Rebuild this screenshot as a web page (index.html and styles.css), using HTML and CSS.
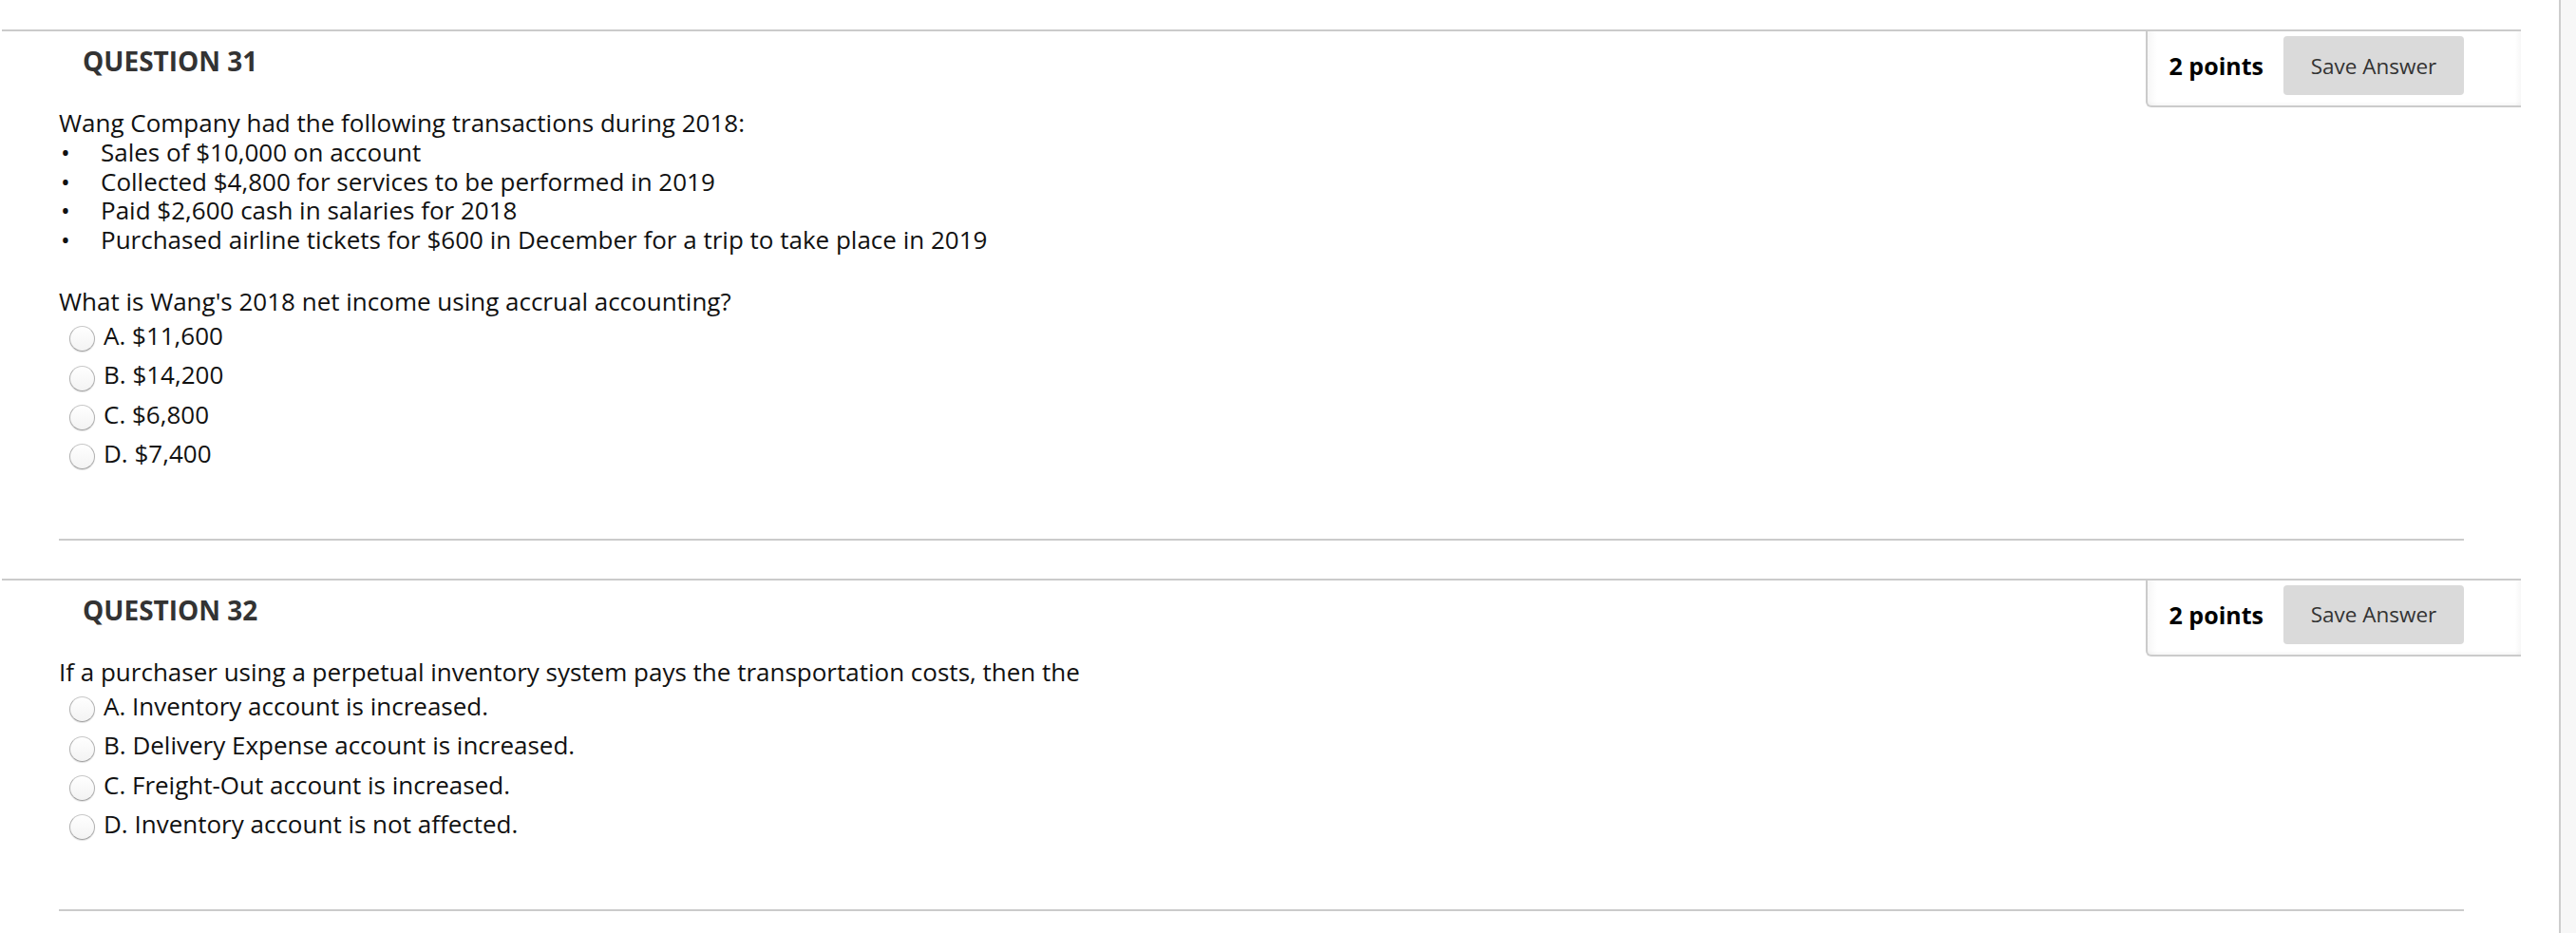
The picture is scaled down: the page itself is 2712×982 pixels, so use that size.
FILE: index.html
```html
<!DOCTYPE html>
<html lang="en">
<head>
<meta charset="utf-8">
<title>Questions</title>
<link rel="stylesheet" href="styles.css">
</head>
<body>
<div class="window">
  <main class="page">
    <section class="question">
      <div class="q-head">
        <h2 class="q-title">QUESTION 31</h2>
        <div class="points-box">
          <span class="points">2 points</span>
          <button class="save-btn" type="button">Save Answer</button>
        </div>
      </div>
      <div class="q-body">
        <p class="line">Wang Company had the following transactions during 2018:</p>
        <ul class="bullets">
          <li><span class="dot">•</span><span>Sales of $10,000 on account</span></li>
          <li><span class="dot">•</span><span>Collected $4,800 for services to be performed in 2019</span></li>
          <li><span class="dot">•</span><span>Paid $2,600 cash in salaries for 2018</span></li>
          <li><span class="dot">•</span><span>Purchased airline tickets for $600 in December for a trip to take place in 2019</span></li>
        </ul>
        <p class="line prompt">What is Wang's 2018 net income using accrual accounting?</p>
        <div class="options">
          <label class="opt"><input class="radio" type="radio" name="q31"><span>A. $11,600</span></label>
          <label class="opt"><input class="radio" type="radio" name="q31"><span>B. $14,200</span></label>
          <label class="opt"><input class="radio" type="radio" name="q31"><span>C. $6,800</span></label>
          <label class="opt"><input class="radio" type="radio" name="q31"><span>D. $7,400</span></label>
        </div>
        <hr class="sep">
      </div>
    </section>

    <section class="question">
      <div class="q-head">
        <h2 class="q-title">QUESTION 32</h2>
        <div class="points-box">
          <span class="points">2 points</span>
          <button class="save-btn" type="button">Save Answer</button>
        </div>
      </div>
      <div class="q-body">
        <p class="line">If a purchaser using a perpetual inventory system pays the transportation costs, then the</p>
        <div class="options">
          <label class="opt"><input class="radio" type="radio" name="q32"><span>A. Inventory account is increased.</span></label>
          <label class="opt"><input class="radio" type="radio" name="q32"><span>B. Delivery Expense account is increased.</span></label>
          <label class="opt"><input class="radio" type="radio" name="q32"><span>C. Freight-Out account is increased.</span></label>
          <label class="opt"><input class="radio" type="radio" name="q32"><span>D. Inventory account is not affected.</span></label>
        </div>
        <hr class="sep">
      </div>
    </section>
  </main>
  <div class="scrollbar"></div>
</div>
</body>
</html>
```

FILE: styles.css
```css
* { box-sizing: border-box; }

html, body {
  margin: 0;
  padding: 0;
  background: #ffffff;
  height: 100%;
}

body {
  font-family: "Open Sans", "Noto Sans", sans-serif;
  color: #111111;
  overflow: hidden;
}

.window {
  display: flex;
  height: 982px;
}

.page {
  flex: 1;
  padding: 31px 40px 0 2px;
}

.scrollbar {
  width: 18px;
  border-left: 2px solid #cdcdcd;
  background: #f7f7f7;
}

.question {
  border-top: 2px solid #cbcbcb;
  margin-bottom: 40px;
}

.q-head {
  display: flex;
  justify-content: space-between;
  align-items: flex-start;
}

.q-title {
  margin: 0;
  padding: 13px 0 0 85px;
  font-size: 28px;
  line-height: 36px;
  font-weight: 700;
  color: #333333;
}

.points-box {
  display: flex;
  align-items: center;
  gap: 21px;
  height: 80px;
  padding: 6px 60px 12px 23px;
  border-left: 2px solid #cbcbcb;
  border-bottom: 2px solid #cbcbcb;
  border-bottom-left-radius: 6px;
  background: linear-gradient(to right, #f6f6f6 0, #ffffff 10px, #ffffff calc(100% - 6px), #f7f7f7 100%);
  box-shadow: inset 0 -4px 4px -3px rgba(0, 0, 0, 0.05);
}

.points {
  font-size: 25px;
  font-weight: 700;
  color: #000000;
  line-height: 34px;
}

.save-btn {
  width: 190px;
  height: 62px;
  border: none;
  border-radius: 4px;
  background: #dadada;
  color: #333333;
  font-family: "Open Sans", "Noto Sans", sans-serif;
  font-size: 22.5px;
  padding: 0;
}

.q-body {
  padding: 1px 60px 0 60px;
  font-size: 26px;
  line-height: 30.8px;
}

.line {
  margin: 0;
}

.prompt {
  margin-top: 34px;
}

.bullets {
  list-style: none;
  margin: 0;
  padding: 0;
}

.bullets li {
  display: flex;
}

.dot {
  width: 44px;
  flex: none;
  padding-left: 2px;
}

.options {
  display: flex;
  flex-direction: column;
}

.opt {
  display: flex;
  align-items: center;
  height: 41.3px;
  padding-left: 11px;
  gap: 9px;
}

.radio {
  appearance: none;
  -webkit-appearance: none;
  width: 27px;
  height: 27px;
  margin: 7px 0 0 0;
  flex: none;
  border-radius: 50%;
  border: 1px solid;
  border-color: #c8c8c8 #b0b0b0 #a2a2a2 #b0b0b0;
  background: linear-gradient(#ffffff, #f3f3f3);
  box-shadow: 0 1px 1px rgba(0, 0, 0, 0.12);
}

.sep {
  margin: 69px 0 0 0;
  height: 2px;
  border: none;
  background: #cbcbcb;
}
```
